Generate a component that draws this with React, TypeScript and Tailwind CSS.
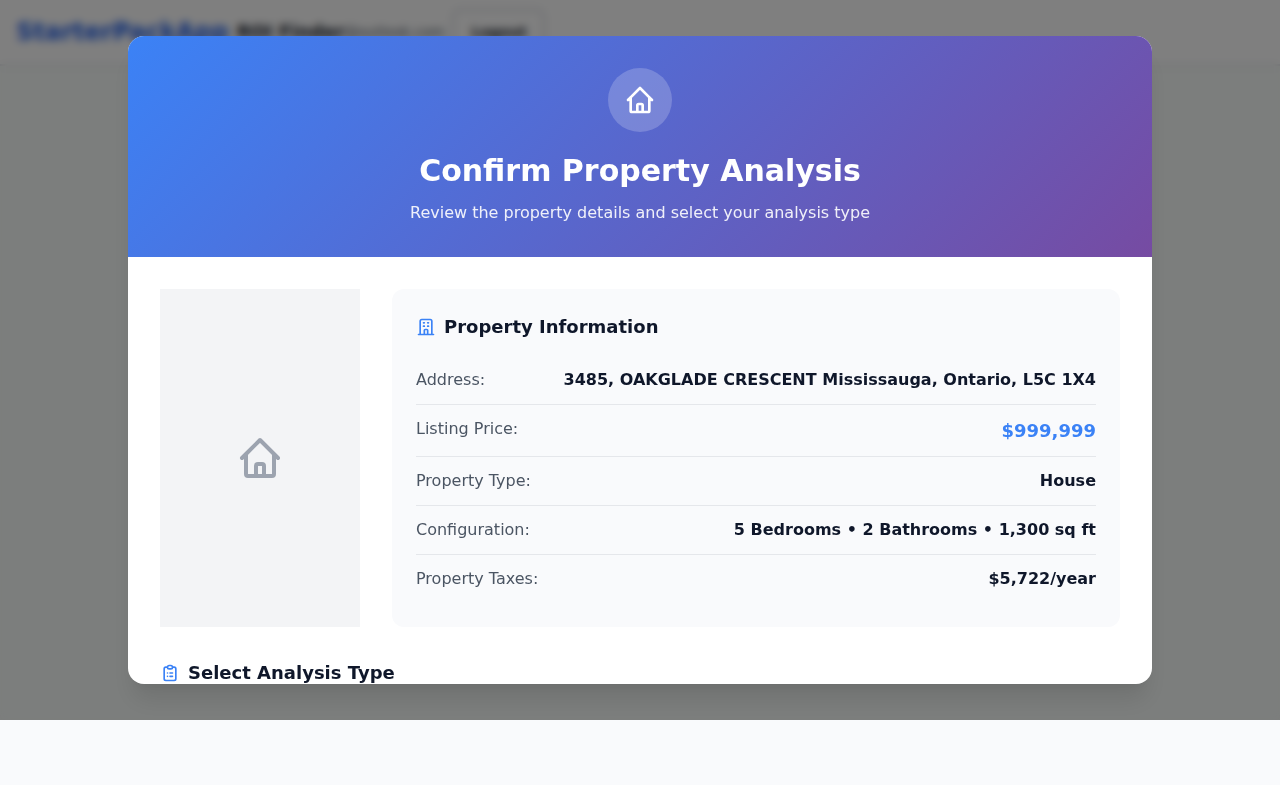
import React from "react";

const HOME =
  "M3 12l2-2m0 0l7-7 7 7M5 10v10a1 1 0 001 1h3m10-11l2 2m-2-2v10a1 1 0 01-1 1h-3m-6 0a1 1 0 001-1v-4a1 1 0 011-1h2a1 1 0 011 1v4a1 1 0 001 1m-6 0h6";
const BUILDING =
  "M19 21V5a2 2 0 00-2-2H7a2 2 0 00-2 2v16m14 0h2m-2 0h-5m-9 0H3m2 0h5M9 7h1m-1 4h1m4-4h1m-1 4h1m-5 10v-5a1 1 0 011-1h2a1 1 0 011 1v5m-4 0h4";
const CLIPBOARD =
  "M9 5H7a2 2 0 00-2 2v12a2 2 0 002 2h10a2 2 0 002-2V7a2 2 0 00-2-2h-2M9 5a2 2 0 002 2h2a2 2 0 002-2M9 5a2 2 0 012-2h2a2 2 0 012 2m-3 7h3m-3 4h3m-6-4h.01M9 16h.01";

function Icon({ d, className }: { d: string; className: string }) {
  return (
    <svg className={className} viewBox="0 0 24 24" fill="none" stroke="currentColor" strokeWidth={2} strokeLinecap="round" strokeLinejoin="round">
      <path d={d} />
    </svg>
  );
}

function SectionTitle({ icon, children }: { icon: string; children: React.ReactNode }) {
  return (
    <h3 className="flex items-center gap-2 text-lg/[27px] font-semibold text-[#0f172a]">
      <Icon d={icon} className="size-5 text-[#3b82f6]" />
      {children}
    </h3>
  );
}

const details = [
  { label: "Address:", value: "3485, OAKGLADE CRESCENT Mississauga, Ontario, L5C 1X4" },
  { label: "Listing Price:", value: "$999,999", price: true },
  { label: "Property Type:", value: "House" },
  { label: "Configuration:", value: "5 Bedrooms • 2 Bathrooms • 1,300 sq ft" },
  { label: "Property Taxes:", value: "$5,722/year" },
];

export default function App() {
  return (
    <div className="relative h-[785px] overflow-hidden bg-[#f9fafc] font-['DejaVu_Sans',sans-serif] text-base">
      <header className="flex h-[66px] items-center border-b-2 border-[#e5e7eb] bg-white px-4">
        <span className="text-2xl font-bold text-[#2563eb]">StarterPackApp</span>
        <span className="ml-2 text-lg font-bold text-[#111827]">ROI Finder</span>
        <span className="text-sm text-[#4b5563]">@outlook.com</span>
        <button className="ml-2 h-[46px] w-[93px] rounded-lg border-2 border-[#d1d5db] text-sm font-semibold text-[#111827]">Logout</button>
      </header>
      <main className="h-[654px] bg-[#f8fcfa]" />

      <div className="absolute inset-x-0 top-0 flex h-[720px] items-center justify-center bg-black/50 backdrop-blur-[4px]">
        <div className="h-[648px] w-[1024px] overflow-hidden rounded-2xl bg-white shadow-[0_20px_25px_-5px_rgba(0,0,0,0.1),0_10px_10px_-5px_rgba(0,0,0,0.04)]">
          <div className="flex flex-col items-center bg-[linear-gradient(135deg,#3b82f6_0%,#764ba2_100%)] p-8 text-white">
            <div className="mb-4 flex size-16 items-center justify-center rounded-full bg-white/20">
              <Icon d={HOME} className="size-8" />
            </div>
            <h2 className="mb-2 text-[30px]/[45px] font-bold">Confirm Property Analysis</h2>
            <p className="opacity-90">Review the property details and select your analysis type</p>
          </div>

          <div className="p-8">
            <div className="mb-8 grid grid-cols-[200px_1fr] gap-8">
              <div className="flex items-center justify-center bg-[#f3f4f6] text-[#9ca3af]">
                <Icon d={HOME} className="size-12" />
              </div>
              <div className="rounded-xl bg-[#f9fafc] p-6">
                <SectionTitle icon={BUILDING}>Property Information</SectionTitle>
                <dl className="mt-4">
                  {details.map(({ label, value, price }) => (
                    <div key={label} className="flex justify-between border-b border-[#e5e7eb] py-3 last:border-b-0">
                      <dt className="text-[#4b5563]">{label}</dt>
                      <dd className={price ? "text-lg/[27px] font-bold text-[#3b82f6]" : "font-semibold text-[#0f172a]"}>{value}</dd>
                    </div>
                  ))}
                </dl>
              </div>
            </div>
            <SectionTitle icon={CLIPBOARD}>Select Analysis Type</SectionTitle>
          </div>
        </div>
      </div>
    </div>
  );
}
